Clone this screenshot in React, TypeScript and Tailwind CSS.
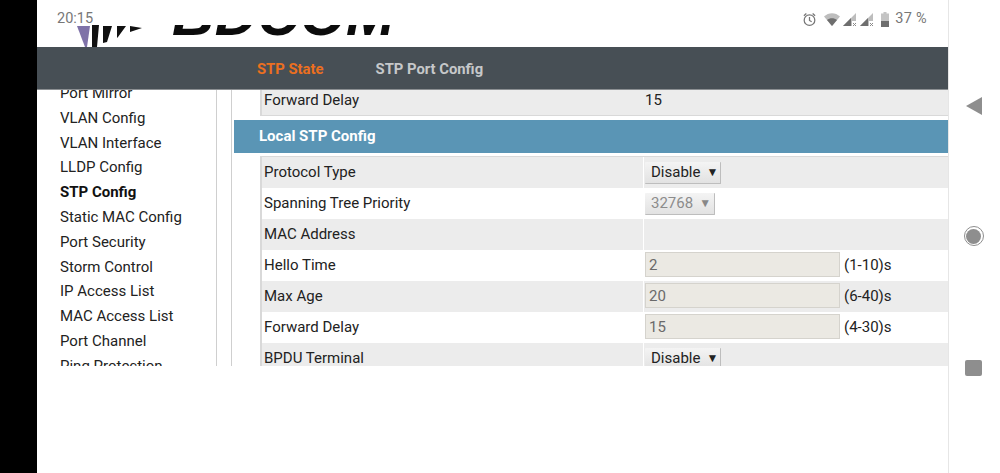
const font = { fontFamily: 'Roboto, "Liberation Sans", sans-serif' };

const menu = ["Port Mirror","VLAN Config","VLAN Interface","LLDP Config","STP Config","Static MAC Config","Port Security","Storm Control","IP Access List","MAC Access List","Port Channel","Ping Protection"];

function Select({ label, disabled, w }: { label: string; disabled?: boolean; w: string }) {
  return (
    <div className={`${w} h-[22px] translate-y-px flex items-center gap-[6px] pl-[6px] rounded-[1px] border-b border-r border-[#bdbdbd] bg-gradient-to-b from-[#f4f4f4] to-[#e2e2e2] ${disabled ? "text-[#8c8c8c]" : "text-[#222]"}`}>
      <span>{label}</span>
      <span className={`text-[12px] ${disabled ? "text-[#888]" : "text-[#222]"}`}>▼</span>
    </div>
  );
}

function TextBox({ value }: { value: string }) {
  return <div className="w-[195px] h-[25px] flex items-center pl-[3px] bg-[#ebe9e3] border border-[#d5d3cd] text-[#6a6a6a]">{value}</div>;
}

function Row({ label, grey, children }: { label: string; grey?: boolean; children?: React.ReactNode }) {
  return (
    <div className={`h-[31px] shrink-0 flex items-center ${grey ? "bg-[#ececec]" : "bg-white"}`}>
      <div className="w-[381px] shrink-0 pl-[2px] text-[#222] -translate-y-px">{label}</div>
      <div className="flex-1 h-full flex items-center gap-[4px] pl-[1px] border-l border-white text-[#222] -translate-y-px">{children}</div>
    </div>
  );
}

function Alarm() {
  return (
    <svg width="15" height="15" viewBox="0 0 24 24" fill="none" stroke="#777" strokeWidth="2">
      <circle cx="12" cy="13" r="8.5" />
      <path d="M12 8v5.5l3.5 2M3 6l4-3.5M21 6l-4-3.5" />
    </svg>
  );
}

function Wifi() {
  return (
    <svg width="16" height="13" viewBox="0 0 16 13">
      <path d="M0 3.5C4.5-1 11.5-1 16 3.5L8 13Z" fill="#bdbdbd" />
      <path d="M3 7C5.8 4.6 10.2 4.6 13 7L8 13Z" fill="#6e6e6e" />
    </svg>
  );
}

function Signal() {
  return (
    <svg width="14" height="13" viewBox="0 0 14 13">
      <path d="M0 13L13 0V8H9V13Z" fill="#bdbdbd" />
      <path d="M0 13L8 5V13Z" fill="#6e6e6e" />
      <path d="M10 10l3 3M13 10l-3 3" stroke="#8a8a8a" strokeWidth="1" />
    </svg>
  );
}

function Battery() {
  return (
    <svg width="8" height="15" viewBox="0 0 8 15">
      <path d="M2.5 0h3v1.5H8V15H0V1.5h2.5Z" fill="#c4c4c4" />
      <path d="M0 9h8v6H0Z" fill="#6e6e6e" />
    </svg>
  );
}

export default function App() {
  return (
    <div className="w-[1000px] h-[473px] flex overflow-hidden bg-white" style={font}>
      <div className="w-[37px] shrink-0 bg-black" />
      <div className="w-[911px] shrink-0 flex flex-col">
        <header className="relative h-[47px] shrink-0 overflow-hidden flex items-start justify-between pl-[20px] pr-[21px] pt-[10px] text-[#777] text-[14.5px] leading-[18px]">
          <svg className="absolute left-[38px] top-[25px]" width="68" height="22" viewBox="0 0 68 22">
            <path d="M2 1L15 1L12 22L10 22Z" fill="#7f72a8" />
            <path d="M17 0H24L22 22H17Z M28 1H37L32 17L28 18Z M42 1H51L43 12L42 13Z M55 1L67 3L55 7Z" fill="#111" />
          </svg>
          <div className="absolute left-[136px] top-[25px] w-[230px] h-[14px] overflow-hidden">
            <div className="-mt-[32px] -ml-[1px] text-[59px] leading-[44px] italic text-[#0c0c0c] tracking-[0.5px] scale-x-[0.99] origin-left" style={{ fontFamily: '"Liberation Sans", sans-serif', fontWeight: 900 }}>BDCOM</div>
          </div>
          <span className="relative">20:15</span>
          <div className="relative flex items-center gap-[3px]">
            <Alarm />
            <span className="ml-[4px]"><Wifi /></span>
            <Signal />
            <Signal />
            <span className="ml-[4px]"><Battery /></span>
            <span className="ml-[3px] tracking-[0.3px]">37 %</span>
          </div>
        </header>
        <nav className="h-[43px] shrink-0 bg-[#474f55] flex items-center gap-[52px] pl-[220px] text-[14.8px] font-bold border-b border-[#8b8f92]">
          <span className="text-[#ec6f1f] translate-y-px">STP State</span>
          <span className="text-[#c6c8ca] translate-y-px">STP Port Config</span>
        </nav>
        <div className="h-[276px] shrink-0 flex overflow-hidden text-[15px] leading-[20px]">
          <aside className="w-[180px] shrink-0 border-r border-[#cfcfcf] pl-[23px] overflow-hidden">
            <div className="-mt-[9.4px] flex flex-col text-[#222]">
              {menu.map((m) => (
                <div key={m} className={`h-[24.8px] shrink-0 flex items-center ${m === "STP Config" ? "font-bold text-[#111]" : ""}`}>{m}</div>
              ))}
            </div>
          </aside>
          <main className="flex-1 ml-[14px] border-l border-[#cfcfcf] pl-[2px] flex flex-col min-w-0">
            <div className="ml-[26px] h-[26px] shrink-0 border-l-2 border-b border-[#d9d9d9] flex flex-col">
              <div className="h-[25px] bg-[#ececec] flex items-center">
                <div className="w-[381px] shrink-0 pl-[2px] text-[#222] relative top-[-3px]">Forward Delay</div>
                <div className="pl-[2px] text-[#222] relative top-[-3px]">15</div>
              </div>
            </div>
            <div className="mt-[4px] h-[33px] shrink-0 bg-[#5a95b5] flex items-center pl-[25px] text-white font-bold text-[15px]">
              <span className="-translate-y-px">Local STP Config</span>
            </div>
            <div className="mt-[3px] ml-[26px] flex-1 min-h-0 overflow-hidden border-l-2 border-t border-[#d9d9d9] flex flex-col">
              <Row label="Protocol Type" grey><Select label="Disable" w="w-[76px]" /></Row>
              <Row label="Spanning Tree Priority"><Select label="32768" disabled w="w-[70px]" /></Row>
              <Row label="MAC Address" grey />
              <Row label="Hello Time"><TextBox value="2" /><span>(1-10)s</span></Row>
              <Row label="Max Age" grey><TextBox value="20" /><span>(6-40)s</span></Row>
              <Row label="Forward Delay"><TextBox value="15" /><span>(4-30)s</span></Row>
              <Row label="BPDU Terminal" grey><Select label="Disable" w="w-[76px]" /></Row>
            </div>
          </main>
        </div>
      </div>
      <div className="flex-1 border-l border-[#e6e6e6] flex flex-col items-center pt-[97px] pr-[2px]">
        <svg width="16" height="18" viewBox="0 0 16 18"><path d="M16 0V18L0 9Z" fill="#8e8e8e" /></svg>
        <div className="mt-[111px] w-[20px] h-[20px] rounded-full border border-[#8e8e8e] flex items-center justify-center">
          <div className="w-[15px] h-[15px] rounded-full bg-[#8e8e8e]" />
        </div>
        <div className="mt-[114px] w-[17px] h-[16px] rounded-[2px] bg-[#8e8e8e]" />
      </div>
    </div>
  );
}
